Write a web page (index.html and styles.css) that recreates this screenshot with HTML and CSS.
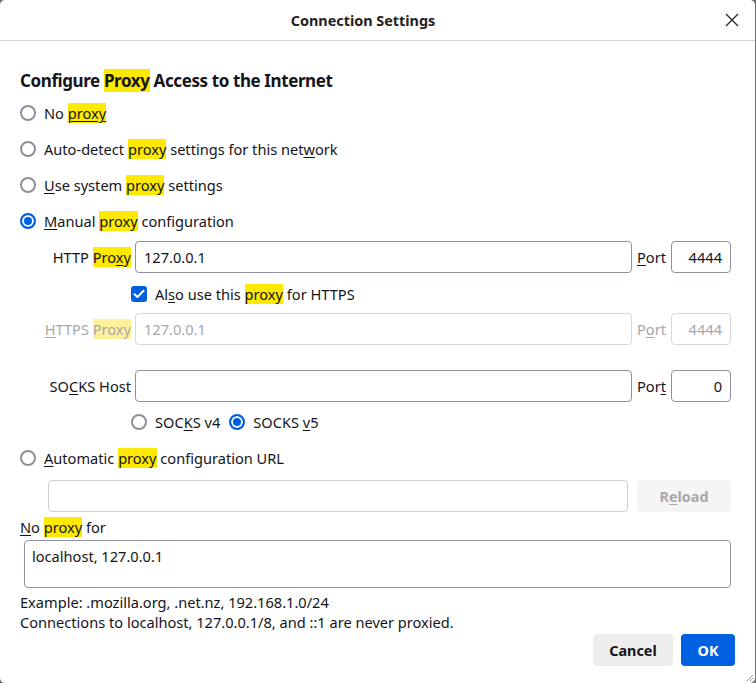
FILE: index.html
```html
<!DOCTYPE html>
<html>
<head>
<meta charset="utf-8">
<link rel="stylesheet" href="styles.css">
</head>
<body>
<div class="window">
  <header class="titlebar">
    <span class="title">Connection Settings</span>
    <svg class="close" width="14" height="14" viewBox="0 0 14 14"><path d="M1 1 L13 13 M13 1 L1 13" stroke="#2b2b2b" stroke-width="1.4" fill="none"/></svg>
  </header>
  <main class="content">
    <h1 class="heading">Configure <mark>Proxy</mark> Access to the Internet</h1>
    <div class="radios">
      <label class="opt"><span class="radio"></span><span>No <u><mark>proxy</mark></u></span></label>
      <label class="opt"><span class="radio"></span><span>Auto-detect <mark>proxy</mark> settings for this net<u>w</u>ork</span></label>
      <label class="opt"><span class="radio"></span><span><u>U</u>se system <mark>proxy</mark> settings</span></label>
      <label class="opt"><span class="radio on"></span><span><u>M</u>anual <mark>proxy</mark> configuration</span></label>
    </div>
    <div class="grid">
      <span class="lbl">HTTP <mark>Pro<u>x</u>y</mark></span>
      <span class="field">127.0.0.1</span>
      <span class="plbl"><u>P</u>ort</span>
      <span class="field num">4444</span>

      <span></span>
      <label class="check-row"><span class="checkbox"><svg width="12" height="10" viewBox="0 0 12 10"><path d="M1.5 5.2 L4.5 8 L10.5 1.8" stroke="#fff" stroke-width="2" fill="none" stroke-linecap="round" stroke-linejoin="round"/></svg></span><span>Al<u>s</u>o use this <mark>proxy</mark> for HTTPS</span></label>
      <span></span><span></span>

      <span class="lbl dis"><u>H</u>TTPS <mark>Proxy</mark></span>
      <span class="field dis">127.0.0.1</span>
      <span class="plbl dis">P<u>o</u>rt</span>
      <span class="field num dis">4444</span>

      <span class="lbl socks">SO<u>C</u>KS Host</span>
      <span class="field socks"></span>
      <span class="plbl socks">Por<u>t</u></span>
      <span class="field num socks">0</span>

      <span></span>
      <div class="socks-radios">
        <label class="opt"><span class="radio"></span><span>SOC<u>K</u>S v4</span></label>
        <label class="opt"><span class="radio on"></span><span>SOCKS <u>v</u>5</span></label>
      </div>
      <span></span><span></span>
    </div>
    <label class="opt auto"><span class="radio"></span><span><u>A</u>utomatic <mark>proxy</mark> configuration URL</span></label>
    <div class="url-row">
      <span class="field url"></span>
      <span class="btn reload">R<u>e</u>load</span>
    </div>
    <div class="noproxy"><u>N</u>o <mark>proxy</mark> for</div>
    <div class="textarea">localhost, 127.0.0.1</div>
    <p class="note">Example: .mozilla.org, .net.nz, 192.168.1.0/24<br>Connections to localhost, 127.0.0.1/8, and ::1 are never proxied.</p>
    <div class="buttons">
      <span class="btn cancel">Cancel</span>
      <span class="btn ok">OK</span>
    </div>
  </main>
  <svg class="grip" width="10" height="10" viewBox="0 0 10 10"><path d="M9 3 L3 9 M9 6 L6 9" stroke="#999" stroke-width="1"/></svg>
</div>
</body>
</html>
```

FILE: styles.css
```css
* { box-sizing: border-box; }
html, body { margin: 0; padding: 0; }
body {
  background: #6e6e6e;
  width: 756px;
  height: 683px;
  overflow: hidden;
  font-family: "Noto Sans", "DejaVu Sans", sans-serif;
  font-size: 14.6px;
  color: #15141a;
}
.window {
  position: relative;
  width: 755px;
  height: 683px;
  background: #fff;
  border-radius: 5px;
  overflow: hidden;
}
.titlebar {
  height: 41px;
  border-bottom: 1px solid #d4d4d4;
  display: flex;
  align-items: center;
  justify-content: center;
  position: relative;
  padding-right: 29px;
}
.title {
  font-weight: bold;
  font-size: 14.4px;
  color: #222;
}
.close {
  position: absolute;
  right: 16px;
  top: 13px;
}
mark {
  background: #ffe900;
  color: inherit;
}
u { text-decoration-thickness: 1px; text-underline-offset: 2px; }
.content {
  padding: 0 0 0 20px;
}
.heading {
  font-size: 17px;
  font-weight: bold;
  line-height: 22px;
  margin: 29px 0 11px 0;
  color: #15141a;
  letter-spacing: -0.4px;
}
.radios {
  display: flex;
  flex-direction: column;
  gap: 16px;
}
.opt {
  display: flex;
  align-items: center;
  height: 20px;
  gap: 8px;
}
.radio {
  width: 16px;
  height: 16px;
  border: 2px solid #8f8f9d;
  border-radius: 50%;
  flex: none;
}
.radio.on {
  border-color: #0061e0;
  background: #0061e0;
  box-shadow: inset 0 0 0 2px #fff;
}
.grid {
  display: grid;
  grid-template-columns: 111px 497px 31px 60px;
  column-gap: 4px;
  margin-top: 10px;
  align-items: center;
}
.lbl { text-align: right; white-space: nowrap; }
.plbl { padding-left: 1px; }
.field {
  height: 32px;
  border: 1px solid #8f8f9d;
  border-radius: 4px;
  display: flex;
  align-items: center;
  padding: 0 8px;
}
.field.num { justify-content: flex-end; }
.dis { color: #a7a7ab; }
.field.dis { border-color: #d7d7db; }
.lbl.dis mark { background: #fff199; color: #a7a7ab; }
.check-row {
  display: flex;
  align-items: center;
  gap: 8px;
  height: 20px;
  margin: 11px 0 9px -4px;
}
.checkbox {
  width: 16px;
  height: 16px;
  border-radius: 3px;
  background: #0061e0;
  display: flex;
  align-items: center;
  justify-content: center;
}
.socks { margin-top: 25px; }
.field.socks { margin-top: 25px; }
.socks-radios {
  display: flex;
  gap: 9px;
  margin: 10px 0 0 -4px;
}
.opt.auto { margin-top: 16px; }
.url-row {
  display: flex;
  margin: 12px 0 0 28px;
  gap: 9px;
  width: 683px;
}
.field.url { flex: 1; border-color: #cfcfd8; }
.btn {
  display: flex;
  align-items: center;
  justify-content: center;
  height: 32px;
  border-radius: 4px;
  font-weight: bold;
  font-size: 14.4px;
}
.reload {
  width: 94px;
  background: #f5f5f5;
  color: #a8a8a8;
}
.noproxy {
  margin-top: 5px;
  height: 20px;
  line-height: 20px;
}
.textarea {
  margin: 3px 0 0 4px;
  width: 707px;
  height: 48px;
  border: 1px solid #8f8f9d;
  border-radius: 4px;
  padding: 5px 7px;
}
.note {
  margin: 4px 0 0 0;
  line-height: 20px;
}
.buttons {
  display: flex;
  justify-content: flex-end;
  gap: 8px;
  margin: 2px 20px 0 0;
}
.cancel { width: 80px; background: #ededed; color: #15141a; }
.ok { width: 54px; background: #0061e0; color: #fff; }
.grip { position: absolute; right: 1px; bottom: 1px; }
```
